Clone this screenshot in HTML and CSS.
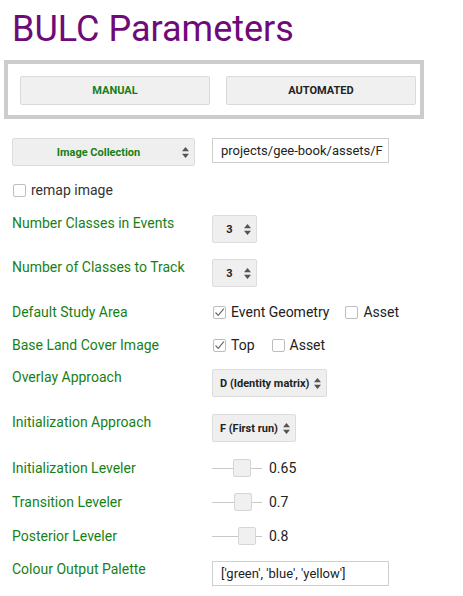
FILE: index.html
```html
<!DOCTYPE html>
<html>
<head>
<meta charset="utf-8">
<link rel="stylesheet" href="styles.css">
</head>
<body>
<h1 class="title">BULC Parameters</h1>
<div class="mode-panel">
  <div class="btn btn-active">MANUAL</div>
  <div class="btn">AUTOMATED</div>
</div>
<div class="form">
  <div class="row row-tall">
    <div class="cell">
      <div class="select select-wide"><span class="select-text green">Image Collection</span><svg class="arrows" width="7" height="11" viewBox="0 0 7 11"><path d="M0 4.2 L3.5 0 L7 4.2Z M0 6.8 L3.5 11 L7 6.8Z"/></svg></div>
    </div>
    <div class="textbox"><span class="textbox-inner">projects/gee-book/assets/F</span></div>
  </div>

  <div class="row row-check">
    <label class="check check-first"><span class="box"></span>remap image</label>
  </div>

  <div class="row row-tall">
    <div class="label">Number Classes in Events</div>
    <div class="select select-num"><span class="select-text">3</span><svg class="arrows" width="7" height="11" viewBox="0 0 7 11"><path d="M0 4.2 L3.5 0 L7 4.2Z M0 6.8 L3.5 11 L7 6.8Z"/></svg></div>
  </div>

  <div class="row row-tall">
    <div class="label">Number of Classes to Track</div>
    <div class="select select-num"><span class="select-text">3</span><svg class="arrows" width="7" height="11" viewBox="0 0 7 11"><path d="M0 4.2 L3.5 0 L7 4.2Z M0 6.8 L3.5 11 L7 6.8Z"/></svg></div>
  </div>

  <div class="row row-check row-center shift-down">
    <div class="label">Default Study Area</div>
    <div class="checks">
      <label class="check"><span class="box"><svg width="11" height="11" viewBox="0 0 11 11"><path d="M1.5 5.5 L4.3 8.3 L9.8 1.6" /></svg></span>Event Geometry</label>
      <label class="check"><span class="box"></span>Asset</label>
    </div>
  </div>

  <div class="row row-check row-center">
    <div class="label">Base Land Cover Image</div>
    <div class="checks">
      <label class="check"><span class="box"><svg width="11" height="11" viewBox="0 0 11 11"><path d="M1.5 5.5 L4.3 8.3 L9.8 1.6" /></svg></span>Top</label>
      <label class="check check-asset2"><span class="box"></span>Asset</label>
    </div>
  </div>

  <div class="row row-tall shift-up">
    <div class="label">Overlay Approach</div>
    <div class="select"><span class="select-text">D (Identity matrix)</span><svg class="arrows" width="7" height="11" viewBox="0 0 7 11"><path d="M0 4.2 L3.5 0 L7 4.2Z M0 6.8 L3.5 11 L7 6.8Z"/></svg></div>
  </div>

  <div class="row row-tall shift-down">
    <div class="label">Initialization Approach</div>
    <div class="select"><span class="select-text">F (First run)</span><svg class="arrows" width="7" height="11" viewBox="0 0 7 11"><path d="M0 4.2 L3.5 0 L7 4.2Z M0 6.8 L3.5 11 L7 6.8Z"/></svg></div>
  </div>

  <div class="row row-slider row-center shift-down">
    <div class="label">Initialization Leveler</div>
    <div class="slider"><span class="track"></span><span class="thumb" style="left:21px"></span></div>
    <span class="value">0.65</span>
  </div>

  <div class="row row-slider row-center">
    <div class="label">Transition Leveler</div>
    <div class="slider"><span class="track"></span><span class="thumb" style="left:22px"></span></div>
    <span class="value">0.7</span>
  </div>

  <div class="row row-slider row-center">
    <div class="label">Posterior Leveler</div>
    <div class="slider"><span class="track"></span><span class="thumb" style="left:26px"></span></div>
    <span class="value">0.8</span>
  </div>

  <div class="row">
    <div class="label">Colour Output Palette</div>
    <div class="textbox"><span class="textbox-inner">['green', 'blue', 'yellow']</span></div>
  </div>
</div>
</body>
</html>
```

FILE: styles.css
```css
* { box-sizing: border-box; }

html, body {
  margin: 0;
  padding: 0;
  background: #ffffff;
}

body {
  font-family: Roboto, "Liberation Sans", sans-serif;
  color: #222222;
  width: 463px;
  height: 596px;
  overflow: hidden;
}

.title {
  margin: 8px 0 0 12px;
  font-size: 36px;
  line-height: 42px;
  font-weight: 400;
  color: #6e0b78;
}

.mode-panel {
  margin: 10px 0 0 4px;
  width: 420px;
  height: 59px;
  border: 4px solid #cccccc;
  padding: 12px 4px 10px 12px;
  display: flex;
  gap: 16px;
}

.btn {
  width: 190px;
  height: 29px;
  background: #f0f0f0;
  border: 1px solid #dadada;
  border-radius: 2px;
  display: flex;
  align-items: center;
  justify-content: center;
  font-size: 11px;
  font-weight: 700;
  color: #222222;
}

.btn-active { color: #177f17; }

.form {
  margin-top: 19px;
  padding-left: 12px;
  display: flex;
  flex-direction: column;
  gap: 16px;
}

.row {
  display: flex;
  align-items: flex-start;
}

.row-center { align-items: center; }
.row-check { height: 17px; }
.row-slider { height: 18px; }
.shift-down { margin-top: 1px; }
.shift-up { margin-top: -1px; }

.cell {
  width: 200px;
  flex: none;
}

.label {
  width: 200px;
  flex: none;
  font-size: 14px;
  line-height: 16px;
  color: #177f17;
}

.row-center .label { line-height: 17px; }

.green { color: #177f17; }

.select {
  height: 28px;
  display: flex;
  align-items: center;
  gap: 5px;
  padding: 0 5px 0 7px;
  background: #efefef;
  border: 1px solid #dcdcdc;
  border-radius: 2px;
  font-size: 11px;
  font-weight: 700;
  color: #222222;
  white-space: nowrap;
}

.select-wide { width: 183px; }
.select-num { width: 45px; }

.select-text {
  flex: 1;
  text-align: center;
}

.arrows {
  flex: none;
  fill: #555555;
}

.textbox {
  width: 177px;
  height: 25px;
  border: 1px solid #cfcfcf;
  padding: 0 8px;
  display: flex;
  align-items: center;
  font-size: 13px;
  color: #222222;
  background: #ffffff;
}

.textbox-inner {
  display: block;
  white-space: nowrap;
  width: 100%;
}

.checks {
  display: flex;
  gap: 16px;
  margin-left: 1px;
}

.check-asset2 { margin-left: 1px; }

.check {
  display: flex;
  align-items: center;
  gap: 5px;
  font-size: 14px;
  line-height: 17px;
  color: #222222;
}

.check-first { margin-left: 1px; color: #333333; }

.box {
  width: 13px;
  height: 13px;
  border: 1px solid #bdbdbd;
  border-radius: 2px;
  background: #ffffff;
  display: flex;
  align-items: center;
  justify-content: center;
}

.box svg {
  fill: none;
  stroke: #6a6a6a;
  stroke-width: 1.2;
}

.slider {
  position: relative;
  width: 50px;
  height: 18px;
  flex: none;
}

.track {
  position: absolute;
  left: 0;
  right: 0;
  top: 9px;
  height: 1px;
  background: #c8c8c8;
}

.thumb {
  position: absolute;
  top: 0;
  width: 18px;
  height: 18px;
  background: #f0f0f0;
  border: 1px solid #d6d6d6;
  border-radius: 2px;
}

.value {
  margin-left: 7px;
  font-size: 14px;
  line-height: 17px;
  color: #222222;
}
```
